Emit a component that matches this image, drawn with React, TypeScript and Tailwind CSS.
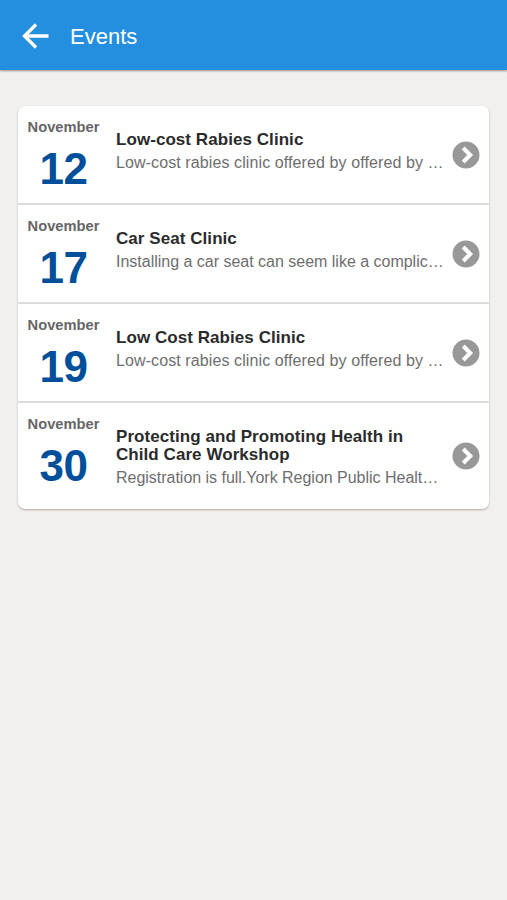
import React from "react";

interface EventItem {
  month: string;
  day: number;
  title: string;
  description: string;
  descriptionClass: string;
}

const events: EventItem[] = [
  {
    month: "November",
    day: 12,
    title: "Low-cost Rabies Clinic",
    description: "Low-cost rabies clinic offered by offered by …",
    descriptionClass: "tracking-[0.1px]",
  },
  {
    month: "November",
    day: 17,
    title: "Car Seat Clinic",
    description: "Installing a car seat can seem like a complic…",
    descriptionClass: "tracking-[-0.01px]",
  },
  {
    month: "November",
    day: 19,
    title: "Low Cost Rabies Clinic",
    description: "Low-cost rabies clinic offered by offered by …",
    descriptionClass: "tracking-[0.1px]",
  },
  {
    month: "November",
    day: 30,
    title: "Protecting and Promoting Health in Child Care Workshop",
    description: "Registration is full.York Region Public Healt…",
    descriptionClass: "tracking-[-0.02px]",
  },
];

const ChevronBadge: React.FC = () => (
  <svg width="28" height="28" viewBox="0 0 28 28" className="block">
    <circle cx="14" cy="14" r="13.5" fill="#989898" />
    <path d="M11.2 7L18.2 14L11.2 21" fill="none" stroke="#fff" strokeWidth="4.1" />
  </svg>
);

const EventRow: React.FC<{ event: EventItem }> = ({ event }) => (
  <li className="flex min-h-[99px] border-t-2 border-[#dcdcdc] first:min-h-[97px] first:border-t-0">
    <div className="w-[91px] shrink-0 text-center">
      <div className="mt-[12px] text-[14.7px] leading-[18px] font-bold text-[#666]">
        {event.month}
      </div>
      <div className="mt-[9px] text-[44px] leading-[48px] font-bold tracking-[-0.5px] text-[#004f9b]">
        {event.day}
      </div>
    </div>
    <div className="ml-[7px] w-[330px] pt-[25px] pb-[21px]">
      <h2 className="text-[17px] leading-[18px] font-bold tracking-[0.06px] text-[#2b2b2b]">
        {event.title}
      </h2>
      <p
        className={`mt-[4px] text-[16px] leading-[20px] whitespace-nowrap text-[#6e6e6e] ${event.descriptionClass}`}
      >
        {event.description}
      </p>
    </div>
    <div className="ml-[6px] self-center">
      <ChevronBadge />
    </div>
  </li>
);

const App: React.FC = () => {
  return (
    <div className="min-h-screen bg-[#f3efec] font-['Liberation_Sans',Arial,sans-serif]">
      <header className="flex h-[70px] items-center bg-[#248fde] text-white shadow-[0_1px_2px_rgba(0,0,0,0.4)]">
        <button className="ml-[22px] pt-[2px]" aria-label="Back">
          <svg width="27" height="26" viewBox="0 0 27 26" fill="none" stroke="#fff" strokeWidth="3.3">
            <path d="M26.5 13H3M14 1.5L2.5 13L14 24.5" />
          </svg>
        </button>
        <h1 className="ml-[21px] pt-[3px] text-[22px]">Events</h1>
      </header>
      <ul className="mx-[18px] mt-[36px] rounded-[7px] bg-white shadow-[0_1px_2px_rgba(0,0,0,0.3)]">
        {events.map((event) => (
          <EventRow key={event.day} event={event} />
        ))}
      </ul>
    </div>
  );
};

export default App;
